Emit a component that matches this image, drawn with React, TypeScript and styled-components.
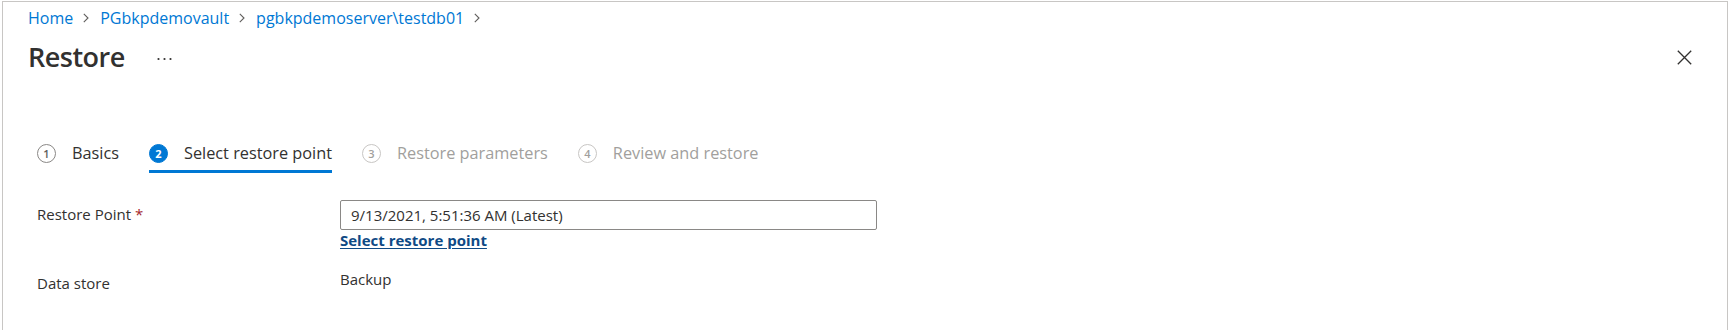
import React from "react";
import styled, { createGlobalStyle } from "styled-components";

const GlobalStyle = createGlobalStyle`
  html, body {
    margin: 0;
    padding: 0;
    background: #ffffff;
  }
  body {
    font-family: "Open Sans", "Liberation Sans", sans-serif;
    color: #323130;
  }
  * { box-sizing: border-box; }
`;

const Frame = styled.div`
  margin: 1px 0 0 2px;
  width: 1726px;
  height: 329px;
  border: 1px solid #c8c6c4;
  border-bottom: none;
  background: #fff;
`;

const Header = styled.header`
  padding: 6px 35px 0 25px;
`;

const Breadcrumb = styled.nav`
  display: flex;
  align-items: center;
  height: 20px;
  font-size: 16px;
  line-height: 20px;
`;

const Crumb = styled.a`
  color: #0078d4;
  text-decoration: none;
  white-space: nowrap;
`;

const CrumbSep = styled.span`
  display: inline-flex;
  align-items: center;
  margin: 0 11px 0 10px;
  color: #605e5c;
`;

const TitleRow = styled.div`
  display: flex;
  align-items: center;
  height: 36px;
  margin-top: 11px;
`;

const Title = styled.h1`
  margin: 0;
  font-size: 27px;
  line-height: 36px;
  font-weight: 600;
  letter-spacing: -0.5px;
  color: #323130;
`;

const MoreButton = styled.span`
  display: inline-flex;
  margin-left: 32px;
  margin-top: 4px;
  color: #323130;
`;

const Spacer = styled.div`
  flex: 1;
`;

const CloseButton = styled.span`
  display: inline-flex;
  color: #323130;
`;

const Tabs = styled.div`
  display: flex;
  gap: 30px;
  margin-top: 67px;
  padding-left: 34px;
`;

const Tab = styled.div<{ $active?: boolean; $disabled?: boolean }>`
  display: flex;
  align-items: center;
  gap: 16px;
  height: 31px;
  padding-bottom: 6px;
  border-bottom: 3px solid ${(p) => (p.$active ? "#0078d4" : "transparent")};
  font-size: 16.3px;
  line-height: 22px;
  color: ${(p) => (p.$disabled ? "#a19f9d" : "#323130")};
  white-space: nowrap;
`;

const StepCircle = styled.span<{ $active?: boolean; $disabled?: boolean }>`
  display: inline-flex;
  align-items: center;
  justify-content: center;
  width: 19px;
  height: 19px;
  border-radius: 50%;
  font-size: 11px;
  font-weight: ${(p) => (p.$active ? 700 : 600)};
  line-height: 1;
  border: 1px solid
    ${(p) => (p.$active ? "#0078d4" : p.$disabled ? "#c8c6c4" : "#8a8886")};
  background: ${(p) => (p.$active ? "#0078d4" : "transparent")};
  color: ${(p) => (p.$active ? "#ffffff" : p.$disabled ? "#a19f9d" : "#605e5c")};
`;

const Form = styled.div`
  display: grid;
  grid-template-columns: 303px 537px;
  row-gap: 19px;
  margin-top: 27px;
  padding-left: 34px;
  font-size: 15px;
  line-height: 20px;
`;

const Label = styled.div`
  padding-top: 4px;
  color: #323130;
`;

const Required = styled.span`
  color: #a4262c;
  margin-left: 4px;
`;

const ValueStack = styled.div`
  display: flex;
  flex-direction: column;
`;

const FakeInput = styled.div`
  display: flex;
  align-items: center;
  width: 537px;
  height: 30px;
  padding: 0 10px;
  border: 1px solid #8a8886;
  border-radius: 2px;
  color: #323130;
  font-size: 15px;
`;

const LinkText = styled.a`
  align-self: flex-start;
  font-weight: 700;
  color: #0f4a85;
  text-decoration: underline;
  text-underline-offset: 2px;
  cursor: pointer;
`;

const Value = styled.div`
  color: #323130;
`;

const Chevron = () => (
  <svg width="6" height="10" viewBox="0 0 6 10" fill="none">
    <path d="M0.8 0.8 L5 5 L0.8 9.2" stroke="currentColor" strokeWidth="1.1" />
  </svg>
);

const Dots = () => (
  <svg width="15" height="4" viewBox="0 0 15 4">
    <circle cx="1.5" cy="2" r="1.1" fill="currentColor" />
    <circle cx="7.5" cy="2" r="1.1" fill="currentColor" />
    <circle cx="13.5" cy="2" r="1.1" fill="currentColor" />
  </svg>
);

const CloseIcon = () => (
  <svg width="15" height="15" viewBox="0 0 15 15" fill="none">
    <path d="M0.8 0.8 L14.2 14.2 M14.2 0.8 L0.8 14.2" stroke="currentColor" strokeWidth="1.3" />
  </svg>
);

const crumbs = ["Home", "PGbkpdemovault", "pgbkpdemoserver\\testdb01"];

const steps = [
  { n: 1, label: "Basics", state: "done" },
  { n: 2, label: "Select restore point", state: "active" },
  { n: 3, label: "Restore parameters", state: "disabled" },
  { n: 4, label: "Review and restore", state: "disabled" },
];

export default function App() {
  return (
    <>
      <GlobalStyle />
      <Frame>
        <Header>
          <Breadcrumb>
            {crumbs.map((c) => (
              <React.Fragment key={c}>
                <Crumb>{c}</Crumb>
                <CrumbSep>
                  <Chevron />
                </CrumbSep>
              </React.Fragment>
            ))}
          </Breadcrumb>
          <TitleRow>
            <Title>Restore</Title>
            <MoreButton>
              <Dots />
            </MoreButton>
            <Spacer />
            <CloseButton>
              <CloseIcon />
            </CloseButton>
          </TitleRow>
        </Header>
        <Tabs>
          {steps.map((s) => (
            <Tab key={s.n} $active={s.state === "active"} $disabled={s.state === "disabled"}>
              <StepCircle $active={s.state === "active"} $disabled={s.state === "disabled"}>
                {s.n}
              </StepCircle>
              {s.label}
            </Tab>
          ))}
        </Tabs>
        <Form>
          <Label>
            Restore Point<Required>*</Required>
          </Label>
          <ValueStack>
            <FakeInput>9/13/2021, 5:51:36 AM (Latest)</FakeInput>
            <LinkText>Select restore point</LinkText>
          </ValueStack>
          <Label>Data store</Label>
          <Value>Backup</Value>
        </Form>
      </Frame>
    </>
  );
}
